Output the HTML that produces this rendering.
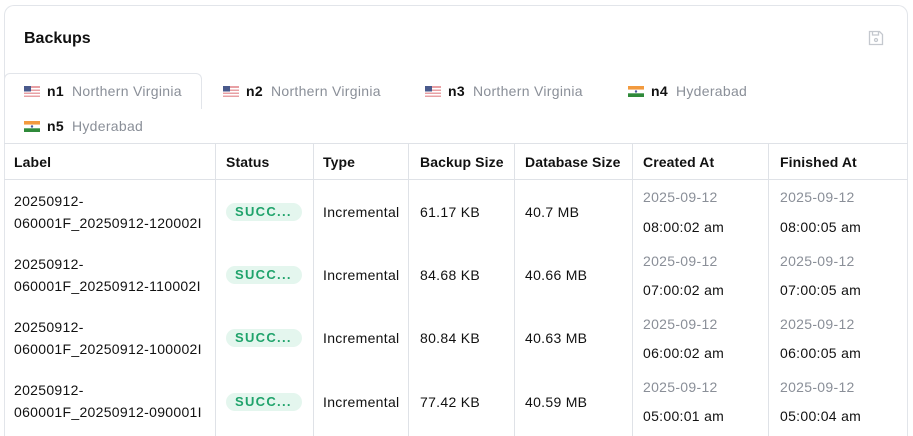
<!DOCTYPE html>
<html style="overflow:hidden;width:913px;height:436px"><head><meta charset="utf-8"><style>
*{box-sizing:border-box;margin:0;padding:0}
body{width:913px;height:436px;overflow:hidden;background:#fff;font-family:"Liberation Sans",sans-serif;font-size:14px;color:#111;position:relative;letter-spacing:0.3px}
.card{position:absolute;left:4px;top:5px;width:904px;height:431px;border:1px solid #e2e5ea;border-bottom:none;border-radius:10px 10px 0 0}
.abs{position:absolute;white-space:nowrap}
.title{left:24px;top:30px;font-size:16px;font-weight:bold;letter-spacing:0}
.tab{position:absolute;height:20px;display:flex;align-items:center;font-size:14px}
.tab b{margin:0 8px 0 7px}
.tab span{color:#8a8f98}
.flag{width:16px;height:11px;display:inline-block}
.vl{position:absolute;top:144px;width:1px;height:292px;background:#dfe2e7}
.hl{position:absolute;left:4px;width:904px;height:1px;background:#dfe2e7}
.th{position:absolute;top:154px;font-weight:bold;letter-spacing:0.1px}
.badge{position:absolute;left:226px;width:76px;height:18px;border-radius:9px;background:#e4f6ee;color:#1fa36b;font-weight:bold;font-size:13px;letter-spacing:1.3px;padding-left:9px;line-height:18px}
.g{color:#8a8f98}
</style></head><body>
<div class="card"></div>
<div class="abs title">Backups</div>
<svg class="abs" style="left:867px;top:29px" width="18" height="18" viewBox="0 0 18 18" fill="none" stroke="#c4c8ce" stroke-width="1.3"><path d="M2.5 2.5h10l3 3v10h-13z"/><path d="M5.5 2.5v3.5h6v-3.5"/><circle cx="9" cy="11" r="1.5"/></svg>
<div class="abs" style="left:4px;top:73px;width:198px;height:36px;border:1px solid #e2e5ea;border-bottom:none;border-radius:6px 6px 0 0;background:#fff"></div>
<svg width="0" height="0" style="position:absolute"><defs>
<g id="us"><rect width="16" height="11" fill="#e8a0a4"/><rect y="2" width="16" height="1.5" fill="#fff"/><rect y="5" width="16" height="1.5" fill="#fff"/><rect y="8" width="16" height="1.5" fill="#fff"/><rect width="7" height="5.5" fill="#4a5a8c"/></g>
<g id="in"><rect width="16" height="3.7" fill="#f29a3e"/><rect y="3.7" width="16" height="3.6" fill="#fff"/><rect y="7.3" width="16" height="3.7" fill="#2f8a3a"/><circle cx="8" cy="5.5" r="1.2" fill="#4a5a9c"/></g>
</defs></svg>
<div class="tab" style="left:24px;top:81px"><svg class="flag"><use href="#us"/></svg><b>n1</b><span>Northern Virginia</span></div>
<div class="tab" style="left:223px;top:81px"><svg class="flag"><use href="#us"/></svg><b>n2</b><span>Northern Virginia</span></div>
<div class="tab" style="left:425px;top:81px"><svg class="flag"><use href="#us"/></svg><b>n3</b><span>Northern Virginia</span></div>
<div class="tab" style="left:628px;top:81px"><svg class="flag"><use href="#in"/></svg><b>n4</b><span>Hyderabad</span></div>
<div class="tab" style="left:24px;top:116px"><svg class="flag"><use href="#in"/></svg><b>n5</b><span>Hyderabad</span></div>
<div class="hl" style="top:143px"></div>
<div class="hl" style="top:179px"></div>
<div class="vl" style="left:215px"></div><div class="vl" style="left:313px"></div><div class="vl" style="left:408px"></div><div class="vl" style="left:514px"></div><div class="vl" style="left:632px"></div><div class="vl" style="left:768px"></div>
<div class="th" style="left:14px">Label</div><div class="th" style="left:226px">Status</div><div class="th" style="left:323px">Type</div><div class="th" style="left:420px">Backup Size</div><div class="th" style="left:525px">Database Size</div><div class="th" style="left:643px">Created At</div><div class="th" style="left:780px">Finished At</div>

<div class="abs" style="left:14px;top:190px;line-height:22px">20250912-<br>060001F_20250912-120002I</div>
<div class="badge" style="top:203px">SUCC...</div>
<div class="abs" style="left:323px;top:204px">Incremental</div><div class="abs" style="left:420px;top:204px">61.17 KB</div><div class="abs" style="left:525px;top:204px">40.7 MB</div>
<div class="abs g" style="left:643px;top:189px">2025-09-12</div><div class="abs" style="left:643px;top:219px">08:00:02 am</div>
<div class="abs g" style="left:780px;top:189px">2025-09-12</div><div class="abs" style="left:780px;top:219px">08:00:05 am</div>

<div class="abs" style="left:14px;top:253px;line-height:22px">20250912-<br>060001F_20250912-110002I</div>
<div class="badge" style="top:266px">SUCC...</div>
<div class="abs" style="left:323px;top:267px">Incremental</div><div class="abs" style="left:420px;top:267px">84.68 KB</div><div class="abs" style="left:525px;top:267px">40.66 MB</div>
<div class="abs g" style="left:643px;top:253px">2025-09-12</div><div class="abs" style="left:643px;top:282px">07:00:02 am</div>
<div class="abs g" style="left:780px;top:253px">2025-09-12</div><div class="abs" style="left:780px;top:282px">07:00:05 am</div>

<div class="abs" style="left:14px;top:316px;line-height:22px">20250912-<br>060001F_20250912-100002I</div>
<div class="badge" style="top:329px">SUCC...</div>
<div class="abs" style="left:323px;top:330px">Incremental</div><div class="abs" style="left:420px;top:330px">80.84 KB</div><div class="abs" style="left:525px;top:330px">40.63 MB</div>
<div class="abs g" style="left:643px;top:316px">2025-09-12</div><div class="abs" style="left:643px;top:345px">06:00:02 am</div>
<div class="abs g" style="left:780px;top:316px">2025-09-12</div><div class="abs" style="left:780px;top:345px">06:00:05 am</div>

<div class="abs" style="left:14px;top:379px;line-height:22px">20250912-<br>060001F_20250912-090001I</div>
<div class="badge" style="top:393px">SUCC...</div>
<div class="abs" style="left:323px;top:394px">Incremental</div><div class="abs" style="left:420px;top:394px">77.42 KB</div><div class="abs" style="left:525px;top:394px">40.59 MB</div>
<div class="abs g" style="left:643px;top:379px">2025-09-12</div><div class="abs" style="left:643px;top:408px">05:00:01 am</div>
<div class="abs g" style="left:780px;top:379px">2025-09-12</div><div class="abs" style="left:780px;top:408px">05:00:04 am</div>
</body></html>
